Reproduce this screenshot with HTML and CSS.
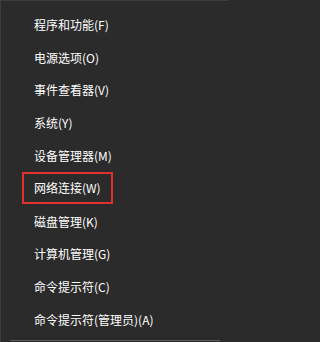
FILE: index.html
```html
<!DOCTYPE html>
<html lang="zh-CN">
<head>
<meta charset="utf-8">
<link rel="stylesheet" href="styles.css">
</head>
<body>
<div class="menu">
  <ul class="list">
    <li class="item">程序和功能(F)</li>
    <li class="item">电源选项(O)</li>
    <li class="item">事件查看器(V)</li>
    <li class="item">系统(Y)</li>
    <li class="item">设备管理器(M)</li>
    <li class="item"><span class="mark">网络连接(W)</span></li>
    <li class="item">磁盘管理(K)</li>
    <li class="item">计算机管理(G)</li>
    <li class="item">命令提示符(C)</li>
    <li class="item">命令提示符(管理员)(A)</li>
  </ul>
  <div class="sep"></div>
</div>
</body>
</html>
```
FILE: styles.css
```css
html, body {
  margin: 0;
  padding: 0;
  background: #2b2b2b;
}
.menu {
  width: 229px;
  height: 342px;
  box-sizing: border-box;
  background: #2b2b2b;
  border-top: 1px solid #3d3d3d;
  border-left: 1px solid #3d3d3d;
  font-family: "Noto Sans CJK SC", sans-serif;
  font-size: 12px;
  font-weight: 400;
  color: #ffffff;
  overflow: hidden;
}
.list {
  list-style: none;
  margin: 0;
  padding: 7px 0 0 0;
}
.item {
  height: 32.8px;
  display: flex;
  align-items: center;
  padding-left: 33px;
}
.mark {
  display: inline-block;
  margin-left: -12px;
  padding: 0 10px 0 10px;
  line-height: 28px;
  border: 2px solid #e2302e;
}
.sep {
  margin: 4px 9px 0 9px;
  height: 1px;
  background: #5a5a5a;
}
```
